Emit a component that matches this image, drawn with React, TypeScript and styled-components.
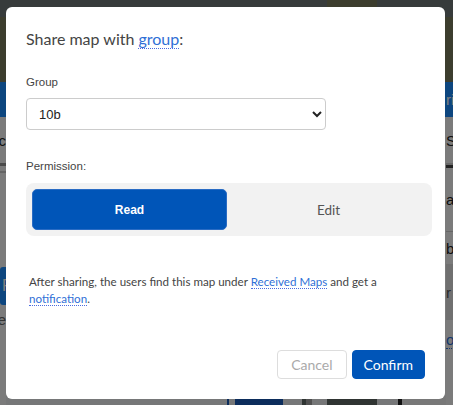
import React from 'react';
import styled, {createGlobalStyle} from 'styled-components';

const GlobalStyle = createGlobalStyle`
  html, body {
    margin: 0;
    padding: 0;
    overflow: hidden;
  }
  body {
    font-family: "Liberation Sans", Arial, sans-serif;
  }
`

// ---------- page behind the dialog ----------

const Page = styled.div`
  height: 405px;
  display: flex;
  flex-direction: column;
  background: #f6f6f6;
`
const TopBar = styled.div`
  height: 17px;
  display: flex;
  justify-content: flex-end;
  background: #6e7676;
  padding-right: 76px;
`
const TopBarTab = styled.div`
  width: 50px;
  background: #787a5c;
`
const Banner = styled.div`
  height: 65px;
  background: #787a5c;
`
const Body = styled.div`
  flex: 1;
  display: flex;
`
const Edge = styled.div<{ $width: number }>`
  width: ${props => props.$width}px;
  overflow: hidden;
  display: flex;
  flex-direction: column;
`
const Main = styled.div`
  flex: 1;
  display: flex;
  flex-direction: column;
`
const NavCell = styled.div<{ $align?: string }>`
  height: 35px;
  flex-shrink: 0;
  background: #1a8cff;
  color: #fff;
  font-size: 15px;
  display: flex;
  align-items: center;
  justify-content: ${props => props.$align || 'flex-start'};
  white-space: nowrap;
`
const EdgeRow = styled.div<{ $height: number, $align?: string, $bg?: string, $color?: string }>`
  height: ${props => props.$height}px;
  flex-shrink: 0;
  display: flex;
  align-items: center;
  justify-content: ${props => props.$align || 'flex-start'};
  background: ${props => props.$bg || 'transparent'};
  color: ${props => props.$color || '#222'};
  font-size: 15px;
  white-space: nowrap;
`
const EdgeLine = styled.div<{ $color: string, $size?: number }>`
  height: ${props => props.$size || 1}px;
  flex-shrink: 0;
  background: ${props => props.$color};
`
const EdgeLink = styled.span`
  color: #2a6fd6;
  border-bottom: 1px dotted #2a6fd6;
`
const BlueBlock = styled.div`
  padding: 0 12px 0 2px;
  height: 38px;
  display: flex;
  align-items: center;
  background: #1a8cff;
  color: #fff;
  border-radius: 3px;
`
const Toolbar = styled.div`
  margin-top: auto;
  height: 10px;
  display: flex;
`
const ToolbarPiece = styled.div<{ $width: number, $bg: string }>`
  width: ${props => props.$width}px;
  background: ${props => props.$bg};
`

// ---------- dialog ----------

const Backdrop = styled.div`
  position: fixed;
  inset: 0;
  background: rgba(0, 0, 0, 0.5);
  padding: 7px 0 0 6px;
`
const Dialog = styled.div`
  width: 439px;
  height: 392px;
  box-sizing: border-box;
  background: #fff;
  border-radius: 6px;
  padding: 20px;
  display: flex;
  flex-direction: column;
`
const Title = styled.h2`
  margin: 0;
  font-family: Lato, "Open Sans", sans-serif;
  font-weight: 400;
  font-size: 16px;
  line-height: 24px;
  color: #444;
`
const Link = styled.a`
  color: #2f6fd6;
  text-decoration: none;
  border-bottom: 1px dotted #4a6ce0;
  cursor: pointer;
`
const Label = styled.label<{ $top: number }>`
  display: block;
  margin-top: ${props => props.$top}px;
  font-size: 11.5px;
  line-height: 16px;
  color: #444;
`
const Select = styled.select`
  margin-top: 8px;
  width: 300px;
  height: 32px;
  box-sizing: border-box;
  padding: 0 6px 0 8px;
  border: 1px solid #ccc;
  border-radius: 4px;
  background: #fff;
  font-family: "Liberation Sans", Arial, sans-serif;
  font-size: 13px;
  color: #222;
`
const Segmented = styled.div`
  margin-top: 9px;
  width: 406px;
  height: 53px;
  box-sizing: border-box;
  padding: 6px;
  display: grid;
  grid-template-columns: 195px 1fr;
  gap: 4px;
  background: #f2f2f2;
  border-radius: 8px;
`
const SegmentButton = styled.button<{ $active?: boolean }>`
  border: 1px solid ${props => props.$active ? '#2a6cc4' : 'transparent'};
  border-radius: 5px;
  background: ${props => props.$active ? '#0055b8' : 'transparent'};
  color: ${props => props.$active ? '#fff' : '#555'};
  font-family: ${props => props.$active ? '"Liberation Sans", Arial, sans-serif' : 'Lato, sans-serif'};
  font-weight: ${props => props.$active ? 700 : 400};
  font-size: ${props => props.$active ? '12px' : '13.5px'};
  cursor: pointer;
`
const Note = styled.p`
  margin: 37px 0 0 3px;
  font-family: Lato, "Open Sans", sans-serif;
  font-size: 11.6px;
  line-height: 17px;
  color: #444;
`
const Footer = styled.div`
  margin-top: auto;
  display: flex;
  justify-content: flex-end;
  gap: 5px;
  padding-right: 0;
`
const FooterButton = styled.button<{ $primary?: boolean }>`
  height: 29px;
  padding: 0 ${props => props.$primary ? 11 : 13}px;
  border-radius: 4px;
  border: 1px solid ${props => props.$primary ? '#0055b8' : '#ddd'};
  background: ${props => props.$primary ? '#0055b8' : '#fff'};
  color: ${props => props.$primary ? '#fff' : '#aaa'};
  font-family: Lato, "Open Sans", sans-serif;
  font-size: 14px;
`

export default function App() {
    return (
        <>
            <GlobalStyle/>
            <Page>
                <TopBar>
                    <TopBarTab/>
                </TopBar>
                <Banner/>
                <Body>
                    <Edge $width={6}>
                        <NavCell/>
                        <EdgeRow $height={46} $align="flex-end">Sync</EdgeRow>
                        <EdgeLine $color="#949494" $size={3}/>
                        <EdgeLine $color="#f6f6f6" $size={5}/>
                        <EdgeLine $color="#c8c8c8" $size={2}/>
                        <EdgeRow $height={94}/>
                        <BlueBlock>Re</BlueBlock>
                        <EdgeRow $height={28} $align="flex-end" $color="#666">Type</EdgeRow>
                    </Edge>
                    <Main>
                        <NavCell/>
                        <Toolbar>
                            <ToolbarPiece $width={221} $bg="#eceef0"/>
                            <ToolbarPiece $width={2} $bg="#185ab8"/>
                            <ToolbarPiece $width={6} $bg="#eceef0"/>
                            <ToolbarPiece $width={48} $bg="#185ab8"/>
                            <ToolbarPiece $width={19} $bg="#eceef0"/>
                            <ToolbarPiece $width={4} $bg="#5e6864"/>
                            <ToolbarPiece $width={6} $bg="#a0a0a0"/>
                            <ToolbarPiece $width={15} $bg="#eceef0"/>
                            <ToolbarPiece $width={50} $bg="#5e6864"/>
                            <ToolbarPiece $width={21} $bg="#eceef0"/>
                            <ToolbarPiece $width={4} $bg="#222"/>
                            <ToolbarPiece $width={44} $bg="#f0f0f0"/>
                        </Toolbar>
                    </Main>
                    <Edge $width={7}>
                        <NavCell>rint</NavCell>
                        <EdgeRow $height={46}>Share</EdgeRow>
                        <EdgeLine $color="#d0d0d0" $size={2}/>
                        <EdgeLine $color="#444" $size={3}/>
                        <EdgeRow $height={63}>ame</EdgeRow>
                        <EdgeLine $color="#ccc"/>
                        <EdgeRow $height={32}>by</EdgeRow>
                        <EdgeRow $height={56} $bg="#e0e0e0" $color="#555">r</EdgeRow>
                        <EdgeRow $height={40}><EdgeLink>os</EdgeLink></EdgeRow>
                    </Edge>
                </Body>
            </Page>
            <Backdrop>
                <Dialog>
                    <Title>Share map with <Link>group</Link>:</Title>
                    <Label $top={23}>Group</Label>
                    <Select defaultValue="10b">
                        <option value="10a">10a</option>
                        <option value="10b">10b</option>
                        <option value="10c">10c</option>
                    </Select>
                    <Label $top={28}>Permission:</Label>
                    <Segmented>
                        <SegmentButton $active>Read</SegmentButton>
                        <SegmentButton>Edit</SegmentButton>
                    </Segmented>
                    <Note>
                        After sharing, the users find this map under <Link>Received Maps</Link> and get
                        a <Link>notification</Link>.
                    </Note>
                    <Footer>
                        <FooterButton>Cancel</FooterButton>
                        <FooterButton $primary>Confirm</FooterButton>
                    </Footer>
                </Dialog>
            </Backdrop>
        </>
    );
}
